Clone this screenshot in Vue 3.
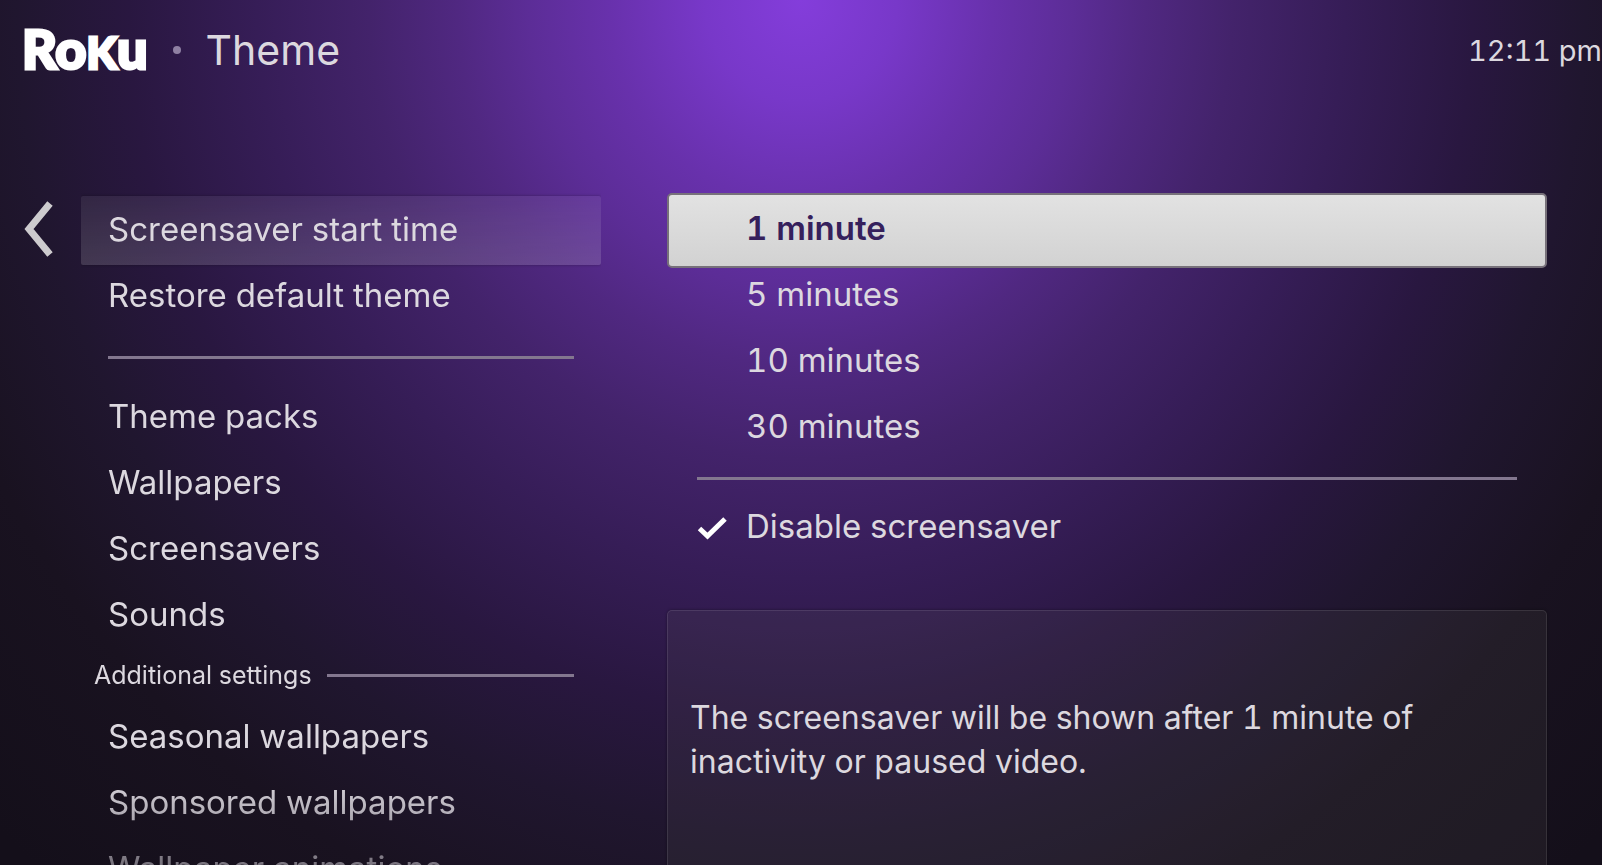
<script setup>
import { ref } from 'vue'

const mainItems = ['Theme packs', 'Wallpapers', 'Screensavers', 'Sounds']
const extraItems = ['Seasonal wallpapers', 'Sponsored wallpapers', 'Wallpaper animations']
const times = ['1 minute', '5 minutes', '10 minutes', '30 minutes']
const focused = ref('1 minute')
const chosen = ref('Disable screensaver')
</script>

<template>
  <div class="screen">
    <header class="topbar">
      <span class="logo" aria-label="Roku">Ro<span class="logo-k">K</span>u</span>
      <span class="dot"></span>
      <h1 class="title">Theme</h1>
      <time class="clock">12:11 pm</time>
    </header>

    <main class="columns">
      <button class="back" type="button" aria-label="Back">
        <svg viewBox="0 0 29 56" width="29" height="56">
          <path d="M26 2.5 L5 28 L26 53.5" fill="none" stroke="#cdcbce" stroke-width="7" />
        </svg>
      </button>

      <nav class="menu" aria-label="Theme settings">
        <button class="item current" type="button">Screensaver start time</button>
        <button class="item" type="button">Restore default theme</button>
        <div class="divider"><hr class="rule" /></div>
        <button v-for="name in mainItems" :key="name" class="item" type="button">{{ name }}</button>
        <div class="section">
          <h2 class="section-name">Additional settings</h2>
          <hr class="rule" />
        </div>
        <button v-for="name in extraItems" :key="name" class="item" type="button">{{ name }}</button>
      </nav>

      <section class="detail">
        <div class="options" role="radiogroup" aria-label="Screensaver start time">
          <label v-for="name in times" :key="name" class="option" :class="{ focused: name === focused }">
            <input v-model="chosen" class="radio" type="radio" name="start" :value="name" />
            <span>{{ name }}</span>
          </label>
          <hr class="rule option-rule" />
          <label class="option">
            <input v-model="chosen" class="radio" type="radio" name="start" value="Disable screensaver" />
            <svg v-if="chosen === 'Disable screensaver'" class="check" viewBox="0 0 30 24" width="30" height="24">
              <path d="M2.5 12.5 L10.5 20 L28 3" fill="none" stroke="#fff" stroke-width="5" />
            </svg>
            <span>Disable screensaver</span>
          </label>
        </div>
        <div class="info">
          <p class="info-text">The screensaver will be shown after 1 minute of inactivity or paused video.</p>
        </div>
      </section>
    </main>
  </div>
</template>

<style>
body {
  margin: 0;
  background: #140f1b;
}
</style>

<style scoped>
.screen {
  box-sizing: border-box;
  height: 100vh;
  overflow: hidden;
  color: #dcd8df;
  font-family: Inter, "Noto Sans", sans-serif;
  font-size: 33px;
  font-variant-numeric: tabular-nums;
  background: radial-gradient(ellipse 800px 850px at 50% 0, #843ddb 0%, #7838c9 12%, #6831ac 24%, #5c2d97 34%, #502881 43%, #43236b 54%, #361d57 68%, #291740 84%, #20162f 98%, #191220 115%, #140f1a 140%);
}
.topbar {
  display: flex;
  align-items: center;
  height: 100px;
  padding-left: 22px;
}
.logo {
  color: #fff;
  font-family: Lato, sans-serif;
  font-size: 54px;
  font-weight: 900;
  line-height: 60px;
  -webkit-text-stroke: 3px #fff;
}
.logo-k {
  font-size: 44px;
}
.dot {
  width: 8px;
  height: 8px;
  margin: 0 25px;
  border-radius: 50%;
  background: #8f80a3;
}
.title {
  margin: 0;
  font-size: 41px;
  font-weight: 400;
  line-height: 60px;
}
.clock {
  margin-left: auto;
  font-size: 29px;
}
.columns {
  display: grid;
  grid-template-columns: 81px 13fr 66px 22fr;
  align-items: start;
  padding: 93px 55px 0 0;
}
button {
  border: 0;
  background: none;
  color: inherit;
  font: inherit;
  text-align: left;
}
.back {
  display: flex;
  align-items: center;
  height: 72px;
  padding: 0 0 0 24px;
}
.menu {
  padding-top: 3px;
  -webkit-mask-image: linear-gradient(#000 585px, rgba(0, 0, 0, 0.5) 670px);
  mask-image: linear-gradient(#000 585px, rgba(0, 0, 0, 0.5) 670px);
}
.item {
  display: block;
  width: 100%;
  height: 66px;
  padding: 0 27px;
  line-height: 64px;
}
.current {
  height: 69px;
  margin-bottom: -3px;
  padding-bottom: 3px;
  border-radius: 2px;
  background: linear-gradient(rgba(255, 255, 255, 0.07), rgba(255, 255, 255, 0.15));
  box-shadow: 0 0 3px rgba(0, 0, 0, 0.3);
}
.rule {
  flex: 1;
  height: 3px;
  margin: 0;
  border: 0;
  background: #83778f;
}
.divider {
  display: flex;
  align-items: center;
  height: 55px;
  padding: 4px 27px 0;
  box-sizing: border-box;
}
.section {
  display: flex;
  align-items: center;
  gap: 15px;
  height: 56px;
  padding: 0 27px 0 13px;
}
.section-name {
  margin: 0;
  font-size: 25px;
  font-weight: 400;
}
.detail {
  grid-column: 4;
}
.option {
  position: relative;
  display: flex;
  align-items: center;
  box-sizing: border-box;
  height: 66px;
  padding: 0 30px 2px 79px;
}
.focused {
  height: 75px;
  margin-bottom: -6px;
  border: 2px solid #77717a;
  border-radius: 5px;
  padding-left: 77px;
  padding-bottom: 5px;
  background: linear-gradient(#e2e2e2, #d2d2d2);
  color: #35205c;
  font-weight: 600;
}
.radio {
  position: absolute;
  left: 30px;
  width: 30px;
  height: 30px;
  margin: 0;
  appearance: none;
}
.check {
  position: absolute;
  left: 30px;
  top: 22px;
}
.option-rule {
  margin: 17px 30px 14px;
}
.info {
  display: flex;
  align-items: center;
  box-sizing: border-box;
  height: 262px;
  margin-top: 50px;
  padding: 0 22px 2px;
  border: 1px solid rgba(255, 255, 255, 0.1);
  border-radius: 5px;
  background: rgba(100, 96, 90, 0.14);
  box-shadow: 0 0 3px rgba(0, 0, 0, 0.4);
}
.info-text {
  margin: 0;
  max-width: 740px;
  font-size: 32px;
  line-height: 44px;
}
</style>
